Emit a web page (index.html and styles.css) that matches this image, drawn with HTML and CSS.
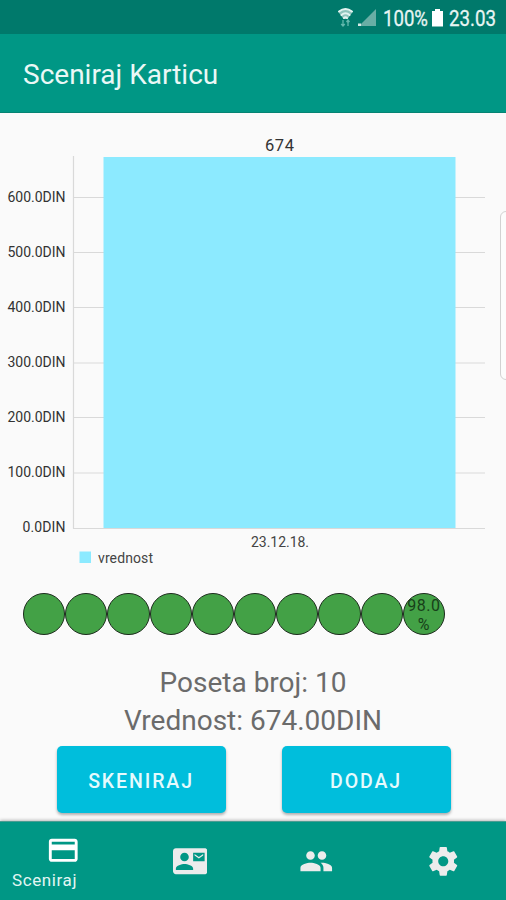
FILE: index.html
```html
<!DOCTYPE html>
<html lang="sr">
<head>
    <meta charset="UTF-8">
    <meta name="viewport" content="width=device-width, initial-scale=1.0">
    <title>Sceniraj Karticu</title>
    <link rel="stylesheet" href="styles.css">
</head>
<body>
    <div class="status-bar">
        <svg class="status-icons" width="170" height="34" viewBox="0 0 170 34">
            <!-- wifi -->
            <path d="M2 11.500Q9.500 5.500 17 11.500L11.500 19h-4z" fill="#8fc4bc"/>
            <g fill="none" stroke="#e2f3f0" stroke-width="2" stroke-linecap="round">
                <path d="M3 11.500Q9.500 6.500 16 11.500M5.500 15Q9.500 11.500 13.500 15M8 18Q9.500 16.500 11 18"/>
            </g>
            <path d="M7 20v6M5.200 24l1.800 2 1.800-2M12 26v-6M10.500 22l1.500-2 1.500 2" fill="none" stroke="#62b8ad" stroke-width="1.300"/>
            <!-- signal -->
            <path d="M40 9v17H23z" fill="#69aea5"/>
            <path d="M22 26v-2.500h3V26z" fill="#d5ebe7"/>
            <text x="47" y="26" textLength="45" lengthAdjust="spacingAndGlyphs">100%</text>
            <!-- battery -->
            <path d="M99 9h5v2h3v15.500H96V11h3z" fill="#fff"/>
            <text x="113" y="26" textLength="47" lengthAdjust="spacingAndGlyphs">23.03</text>
        </svg>
    </div>
    <div class="app-bar">
        <h1>Sceniraj Karticu</h1>
    </div>

    <div class="content">
        <svg class="chart" width="506" height="469" viewBox="0 113 506 469">
            <g class="grid">
                <path d="M73.500 156V528.500"/>
                <path d="M73 197.500H485M73 252.500H485M73 307.500H485M73 363H485M73 417.500H485M73 473H485M73 528.500H485"/>
            </g>
            <rect x="103.500" y="157" width="352" height="371" fill="#8ceaff"/>
            <g class="y-labels">
                <text x="65.500" y="202" textLength="58">600.0DIN</text>
                <text x="65.500" y="257" textLength="58">500.0DIN</text>
                <text x="65.500" y="312" textLength="58">400.0DIN</text>
                <text x="65.500" y="367" textLength="58">300.0DIN</text>
                <text x="65.500" y="422" textLength="58">200.0DIN</text>
                <text x="65.500" y="477" textLength="58">100.0DIN</text>
                <text x="65.500" y="532" textLength="43">0.0DIN</text>
            </g>
            <text class="bar-value" x="279.500" y="151" textLength="29">674</text>
            <text class="x-label" x="280" y="547" textLength="58">23.12.18.</text>
            <rect x="79.500" y="551.500" width="11.500" height="11.500" fill="#8ceaff"/>
            <text class="legend" x="98" y="563" textLength="55">vrednost</text>
        </svg>
        <div class="edge-handle"></div>

        <div class="circles">
            <div class="circle"></div>
            <div class="circle"></div>
            <div class="circle"></div>
            <div class="circle"></div>
            <div class="circle"></div>
            <div class="circle"></div>
            <div class="circle"></div>
            <div class="circle"></div>
            <div class="circle"></div>
            <div class="circle">98.0<br>%</div>
        </div>

        <div class="info">
            <p class="visits">Poseta broj: 10</p>
            <p class="amount">Vrednost: 674.00DIN</p>
        </div>

        <div class="buttons">
            <button type="button">SKENIRAJ</button>
            <button type="button">DODAJ</button>
        </div>
    </div>

    <div class="bottom-nav">
        <a class="nav-item active">
            <svg viewBox="0 0 24 24"><path d="M20 4H4c-1.110 0-1.990.89-1.990 2L2 18c0 1.110.89 2 2 2h16c1.110 0 2-.89 2-2V6c0-1.110-.89-2-2-2zm0 14H4v-6h16v6zm0-10H4V6h16v2z"/></svg>
            <span>Sceniraj</span>
        </a>
        <a class="nav-item">
            <svg viewBox="0 0 24 24"><path d="M21 8V7l-3 2-3-2v1l3 2 3-2zm1-5H2C.9 3 0 3.900 0 5v14c0 1.100.9 2 2 2h20c1.100 0 1.990-.9 1.990-2L24 5c0-1.100-.9-2-2-2zM8 6c1.660 0 3 1.340 3 3s-1.340 3-3 3-3-1.340-3-3 1.340-3 3-3zm6 12H2v-1c0-2 4-3.100 6-3.100s6 1.100 6 3.100v1zm8-6h-8V6h8v6z"/></svg>
        </a>
        <a class="nav-item">
            <svg viewBox="0 0 24 24"><path d="M16 11c1.660 0 2.990-1.340 2.990-3S17.660 5 16 5c-1.660 0-3 1.340-3 3s1.340 3 3 3zm-8 0c1.660 0 2.990-1.340 2.990-3S9.660 5 8 5C6.340 5 5 6.340 5 8s1.340 3 3 3zm0 2c-2.330 0-7 1.170-7 3.500V19h14v-2.500c0-2.330-4.670-3.500-7-3.500zm8 0c-.29 0-.62.02-.97.05 1.160.84 1.970 1.970 1.970 3.450V19h6v-2.500c0-2.330-4.670-3.500-7-3.500z"/></svg>
        </a>
        <a class="nav-item">
            <svg viewBox="0 0 24 24"><path d="M19.430 12.980c.04-.32.07-.64.07-.98s-.03-.66-.07-.98l2.110-1.650c.19-.15.24-.42.12-.64l-2-3.460c-.12-.22-.39-.3-.61-.22l-2.490 1c-.52-.4-1.080-.73-1.690-.98l-.38-2.650C14.460 2.180 14.250 2 14 2h-4c-.25 0-.46.18-.49.42l-.38 2.650c-.61.25-1.170.59-1.690.98l-2.490-1c-.23-.09-.49 0-.61.22l-2 3.460c-.13.22-.07.49.12.64l2.110 1.650c-.04.32-.07.65-.07.98s.03.66.07.98l-2.110 1.650c-.19.15-.24.42-.12.64l2 3.460c.12.22.39.3.61.22l2.490-1c.52.4 1.080.73 1.690.98l.38 2.650c.03.24.24.42.49.42h4c.25 0 .46-.18.49-.42l.38-2.650c.61-.25 1.170-.59 1.690-.98l2.490 1c.23.09.49 0 .61-.22l2-3.460c.12-.22.07-.49-.12-.64l-2.110-1.650zM12 15.500c-1.930 0-3.500-1.570-3.500-3.500s1.570-3.500 3.500-3.500 3.500 1.570 3.500 3.500-1.570 3.500-3.500 3.500z"/></svg>
        </a>
    </div>
</body>
</html>
```
FILE: styles.css
```css
* {
    box-sizing: border-box;
}
body {
    margin: 0;
    width: 506px;
    height: 900px;
    display: flex;
    flex-direction: column;
    overflow: hidden;
    background: #fafafa;
    font-family: Roboto, sans-serif;
}
.status-bar {
    height: 34px;
    display: flex;
    justify-content: flex-end;
    background: #00796b;
}
.status-icons text {
    font-size: 22px;
    fill: #e8f5f3;
    stroke: #e8f5f3;
    stroke-width: 0.3;
}
.app-bar {
    height: 79px;
    padding: 0 23px;
    display: flex;
    align-items: center;
    background: #009785;
    border-bottom: 1px solid #058373;
}
.app-bar h1 {
    margin: 3px 0 0;
    font-size: 28px;
    font-weight: 400;
    color: #eaf8f6;
}
.content {
    position: relative;
    flex: 1;
}
.chart {
    display: block;
}
.grid {
    fill: none;
    stroke: #d9d9d9;
    stroke-width: 1.2;
}
.chart text {
    font-size: 14px;
    fill: #333;
}
.y-labels {
    text-anchor: end;
}
.chart .bar-value {
    font-size: 16.5px;
    text-anchor: middle;
}
.chart .x-label {
    text-anchor: middle;
    fill: #444;
}
.chart .legend {
    fill: #444;
}
/* panel handle on the right screen edge */
.edge-handle {
    position: absolute;
    top: 98px;
    right: -10px;
    width: 16px;
    height: 169px;
    border: 1px solid #d2d2d2;
    border-radius: 6px;
    background: #fcfcfc;
}
.circles {
    display: flex;
    padding: 11px 0 0 23px;
}
.circle {
    width: 42.2px;
    height: 42.2px;
    border: 1.5px solid #1c2b1c;
    border-radius: 50%;
    background: #43a146;
    color: #173f19;
    font-size: 16px;
    letter-spacing: 0.5px;
    line-height: 19px;
    padding-top: 2px;
    text-align: center;
    white-space: nowrap;
}
.info {
    padding-top: 29px;
    text-align: center;
    font-size: 28px;
    line-height: 38px;
    color: #6b6b6b;
}
.info p {
    margin: 0;
}
.buttons {
    display: flex;
    gap: 56px;
    padding: 6px 0 0 56.5px;
}
.buttons button {
    width: 169px;
    height: 67px;
    padding: 3px 6px 0;
    border: none;
    border-radius: 5px;
    background: #00bedc;
    box-shadow: 0 2px 3px rgba(0, 0, 0, 0.3);
    color: #e6fafd;
    font-family: Roboto, sans-serif;
    font-size: 19.5px;
    font-weight: 500;
    letter-spacing: 1.9px;
}
.bottom-nav {
    position: relative;
    height: 79px;
    display: flex;
    background: #009785;
    border-top: 1px solid #4b9c92;
    box-shadow: 0 -1px 3px rgba(0, 0, 0, 0.25);
}
.nav-item {
    flex: 1;
    display: flex;
    flex-direction: column;
    align-items: center;
    justify-content: center;
}
.nav-item svg {
    width: 34.5px;
    height: 34.5px;
    fill: #ececec;
}
.active {
    justify-content: flex-start;
    padding-top: 11px;
}
.active svg {
    fill: #fff;
}
.active span {
    align-self: flex-start;
    margin: 2px 0 0 12px;
    font-size: 17px;
    line-height: 20px;
    letter-spacing: 0.6px;
    color: #e3f6f3;
}
```
